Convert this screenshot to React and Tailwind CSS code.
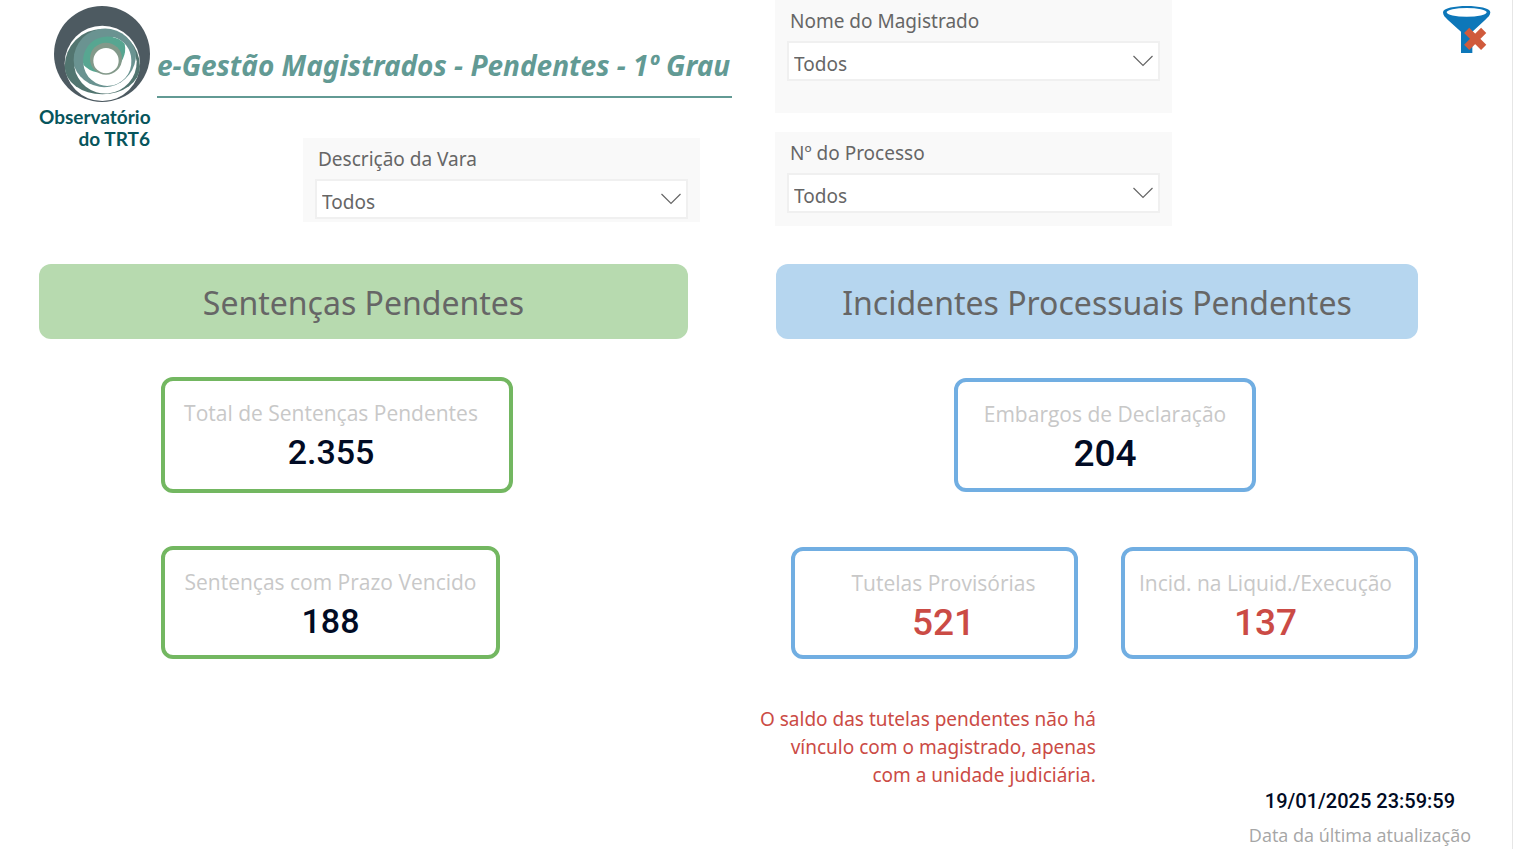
import React from "react";

function Logo() {
  return (
    <div className="w-[111px] shrink-0 pt-1.5 text-right">
      <svg viewBox="72 18 288 288" className="ml-auto size-24" role="img" aria-label="Observatório">
        <circle cx="216" cy="162" r="144" fill="#4d5a61" />
        <circle cx="217" cy="190" r="113" fill="#fff" />
        <path d="M104 200 A113 113 0 1 1 330 200 A113 83 0 0 1 104 200Z" fill="#527570" />
        <path d="M133 200 A94 94 0 0 0 320 184 L310 140 L200 150Z" fill="#fff" />
        <path d="M133 200 A94 94 0 0 1 318 160 A96 98 0 0 1 133 200Z" fill="#6a9391" />
        <path d="M160 190 A72 72 0 0 0 304 181 A72 72 0 0 0 250 111 L200 150Z" fill="#fff" />
        <path d="M160 194 A73 73 0 0 1 284 131 A72 72 0 0 1 160 194Z" fill="#57a691" />
        <circle cx="228" cy="176" r="48" fill="#83998a" />
        <circle cx="228" cy="182" r="38" fill="#fff" />
      </svg>
      <p className="mt-1 font-['Lato',sans-serif] text-[19px] leading-[22px] font-bold text-[#07555c]">
        Observatório
        <br />
        do TRT6
      </p>
    </div>
  );
}

function Slicer({ id, label, className = "" }) {
  return (
    <div className={`w-[397px] bg-[#f9f9f9] px-3 pt-2 ${className}`}>
      <label htmlFor={id} className="block pl-[3px] text-[19px] leading-[26px]">
        {label}
      </label>
      <div className="relative mt-[7px]">
        <select
          id={id}
          className="block h-10 w-full appearance-none border-2 border-[#f0f0f0] bg-white pt-1.5 pl-[5px] text-[19px]"
        >
          <option>Todos</option>
        </select>
        <svg
          viewBox="0 0 20 12"
          className="pointer-events-none absolute top-[14px] right-[7px] h-3 w-5 fill-none stroke-[#666666]"
          aria-hidden="true"
        >
          <path d="M0.5 1 L10 10.5 L19.5 1" strokeWidth="1.2" />
        </svg>
      </div>
    </div>
  );
}

function Card({ label, value, className, valueClass = "text-[37px] text-[#010b24]" }) {
  return (
    <div className={`flex flex-col items-center rounded-xl border-4 pt-[17px] ${className}`}>
      <p className="font-['Open_Sans',sans-serif] text-[21px] leading-[30px] whitespace-nowrap text-[#c8c8c8]">
        {label}
      </p>
      <p className={`font-['Roboto',sans-serif] leading-[49px] font-medium ${valueClass}`}>{value}</p>
    </div>
  );
}

function ClearFilters() {
  return (
    <button type="button" aria-label="Limpar filtros" className="mt-1 mr-5 size-[50px]">
      <svg viewBox="0 0 150 150" className="size-full" aria-hidden="true">
        <path
          d="M3 25 C3 0 145 0 145 25 C145 34 138 40 130 47 L91 83 V147 H57 V83 L17 47 C9 40 3 34 3 25Z"
          fill="#0d77b9"
        />
        <ellipse cx="74" cy="25" rx="60" ry="13" fill="#fff" />
        <path d="M74 79 L125 130 M125 79 L74 130" stroke="#d05a3c" strokeWidth="22" />
      </svg>
    </button>
  );
}

export default function App() {
  return (
    <main className="grid min-h-screen grid-cols-[775fr_737fr] content-start border-r border-[#e6e6e6] bg-white font-['Noto_Sans',sans-serif] text-[#666666]">
      <header className="flex h-[264px] pl-[39px]">
        <Logo />
        <div className="flex flex-1 flex-col pt-[46px] pl-[7px]">
          <h1 className="w-[575px] border-b-2 border-[#629a94] pb-3 text-[28px] leading-[38px] font-bold whitespace-nowrap text-[#629a94] italic">
            e-Gestão Magistrados - Pendentes - 1º Grau
          </h1>
          <Slicer id="vara" label="Descrição da Vara" className="mt-10 mr-[75px] h-[84px] self-end" />
        </div>
      </header>

      <div className="flex h-[264px] items-start justify-between">
        <div className="flex flex-col gap-[19px]">
          <Slicer id="magistrado" label="Nome do Magistrado" className="h-[113px]" />
          <Slicer id="processo" label="Nº do Processo" className="h-[94px]" />
        </div>
        <ClearFilters />
      </div>

      <section className="pr-[87px] pl-[39px]">
        <h2 className="rounded-xl bg-[#b7daaf] pt-[3px] text-center text-[32px] leading-[72px]">
          Sentenças Pendentes
        </h2>
        <div className="mt-[38px] flex flex-col gap-[53px] pl-[122px]">
          <Card
            label="Total de Sentenças Pendentes"
            value="2.355"
            className="h-[116px] w-[352px] border-[#73b761] pr-3"
            valueClass="text-[34px] text-[#010b24]"
          />
          <Card
            label="Sentenças com Prazo Vencido"
            value="188"
            className="h-[113px] w-[339px] border-[#73b761]"
            valueClass="text-[34px] text-[#010b24]"
          />
        </div>
      </section>

      <section className="pr-[94px] pl-px">
        <h2 className="rounded-xl bg-[#b6d6ef] pt-[3px] text-center text-[32px] leading-[72px]">
          Incidentes Processuais Pendentes
        </h2>
        <div className="mt-[39px] flex justify-center pl-4">
          <Card label="Embargos de Declaração" value="204" className="h-[114px] w-[302px] border-[#71aee2]" />
        </div>
        <div className="mt-[55px] flex justify-between pl-[15px]">
          <Card
            label="Tutelas Provisórias"
            value="521"
            className="h-[112px] w-[287px] border-[#71aee2] pl-[18px]"
            valueClass="text-[37px] text-[#cb4b45]"
          />
          <Card
            label="Incid. na Liquid./Execução"
            value="137"
            className="h-[112px] w-[297px] border-[#71aee2] pr-2"
            valueClass="text-[37px] text-[#cb4b45]"
          />
        </div>
      </section>

      <footer className="col-span-2 flex items-start justify-end pt-[46px] pr-[41px]">
        <p className="text-right text-[19px] leading-7 text-[#cb4b45]">
          O saldo das tutelas pendentes não há
          <br />
          vínculo com o magistrado, apenas
          <br />
          com a unidade judiciária.
        </p>
        <div className="mt-[82px] ml-[153px] text-center">
          <p className="font-['Roboto',sans-serif] text-[20px] leading-7 font-medium text-[#010b24]">
            19/01/2025 23:59:59
          </p>
          <p className="mt-2 font-['Open_Sans',sans-serif] text-[18px] leading-6 text-[#a6a6a6]">
            Data da última atualização
          </p>
        </div>
      </footer>
    </main>
  );
}
